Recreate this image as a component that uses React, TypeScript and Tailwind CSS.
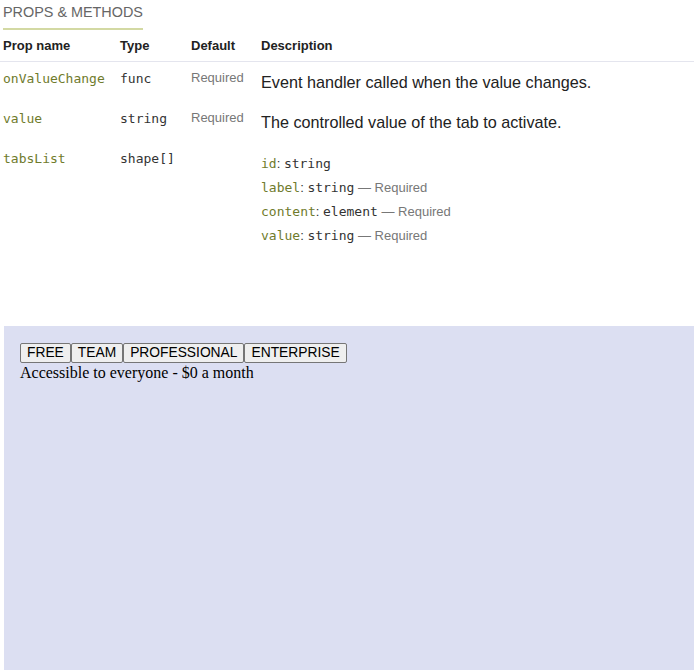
import { useState } from 'react';

const mono = "font-['DejaVu_Sans_Mono',monospace]";
const sans = "font-['Liberation_Sans',Arial,sans-serif]";

const tabs = [
  { id: 'free', label: 'FREE', content: 'Accessible to everyone - $0 a month' },
  { id: 'team', label: 'TEAM', content: 'For small teams - $10 a month' },
  { id: 'pro', label: 'PROFESSIONAL', content: 'For professionals - $30 a month' },
  { id: 'ent', label: 'ENTERPRISE', content: 'For large organisations - contact us' },
];

const shapeFields = [
  { key: 'id', type: 'string', required: false },
  { key: 'label', type: 'string', required: true },
  { key: 'content', type: 'element', required: true },
  { key: 'value', type: 'string', required: true },
];

function PropRow({ name, type, def, children }: { name: string; type: string; def?: string; children: React.ReactNode }) {
  return (
    <div className="grid grid-cols-[117px_71px_70px_1fr] pl-[3px] pb-[7px]">
      <div className={`${mono} text-[13px] leading-[20px] pt-[7px] text-[#6f7b2c]`}>{name}</div>
      <div className={`${mono} text-[13px] leading-[20px] pt-[7px] text-[#333]`}>{type}</div>
      <div className={`${sans} text-[13px] leading-[20px] pt-[6px] text-[#777]`}>{def}</div>
      <div>{children}</div>
    </div>
  );
}

export default function App() {
  const [active, setActive] = useState('free');
  const current = tabs.find((t) => t.id === active);

  return (
    <div className="bg-white w-[694px] h-[670px] overflow-hidden">
      {/* Props table */}
      <div className={sans}>
        <div className="pl-[3px]">
          <span className="inline-block text-[14.4px] leading-[20px] pt-[1px] pb-[6px] text-[#666] border-b-2 border-[#d3d9a3] w-[140px]">
            PROPS &amp; METHODS
          </span>
        </div>
        <div className="grid grid-cols-[117px_71px_70px_1fr] pl-[3px] h-[32px] items-center border-b border-[#e4e5ee] text-[13px] font-bold text-[#222]">
          <div>Prop name</div>
          <div>Type</div>
          <div>Default</div>
          <div>Description</div>
        </div>

        <PropRow name="onValueChange" type="func" def="Required">
          <p className="text-[16.2px] leading-[24px] pt-[8px] pb-[1px] text-[#222]">Event handler called when the value changes.</p>
        </PropRow>
        <PropRow name="value" type="string" def="Required">
          <p className="text-[16.2px] leading-[24px] pt-[8px] pb-[1px] text-[#222]">The controlled value of the tab to activate.</p>
        </PropRow>
        <PropRow name="tabsList" type="shape[]">
          <ul className="pt-[10px]">
            {shapeFields.map((f) => (
              <li key={f.key} className="text-[13px] leading-[24px]">
                <span className={`${mono} text-[#6f7b2c]`}>{f.key}</span>
                <span className="text-[#333]">: </span>
                <span className={`${mono} text-[#333]`}>{f.type}</span>
                {f.required && <span className="text-[#777]"> — Required</span>}
              </li>
            ))}
          </ul>
        </PropRow>
      </div>

      {/* Live demo */}
      <div className="mt-[71px] ml-[4px] h-[344px] bg-[#dcdff2] pt-[17px] pl-4 font-['Liberation_Serif',serif] text-[16px] text-black">
        <div className="flex">
          {tabs.map((t) => (
            <button
              key={t.id}
              onClick={() => setActive(t.id)}
              className={`${sans} text-[13.8px] leading-[16px] px-[6px] py-[1px] bg-[#efefef] border border-[#767676] rounded-[2px] text-black`}
            >
              {t.label}
            </button>
          ))}
        </div>
        <div className="leading-[19px]">{current?.content}</div>
      </div>
    </div>
  );
}
